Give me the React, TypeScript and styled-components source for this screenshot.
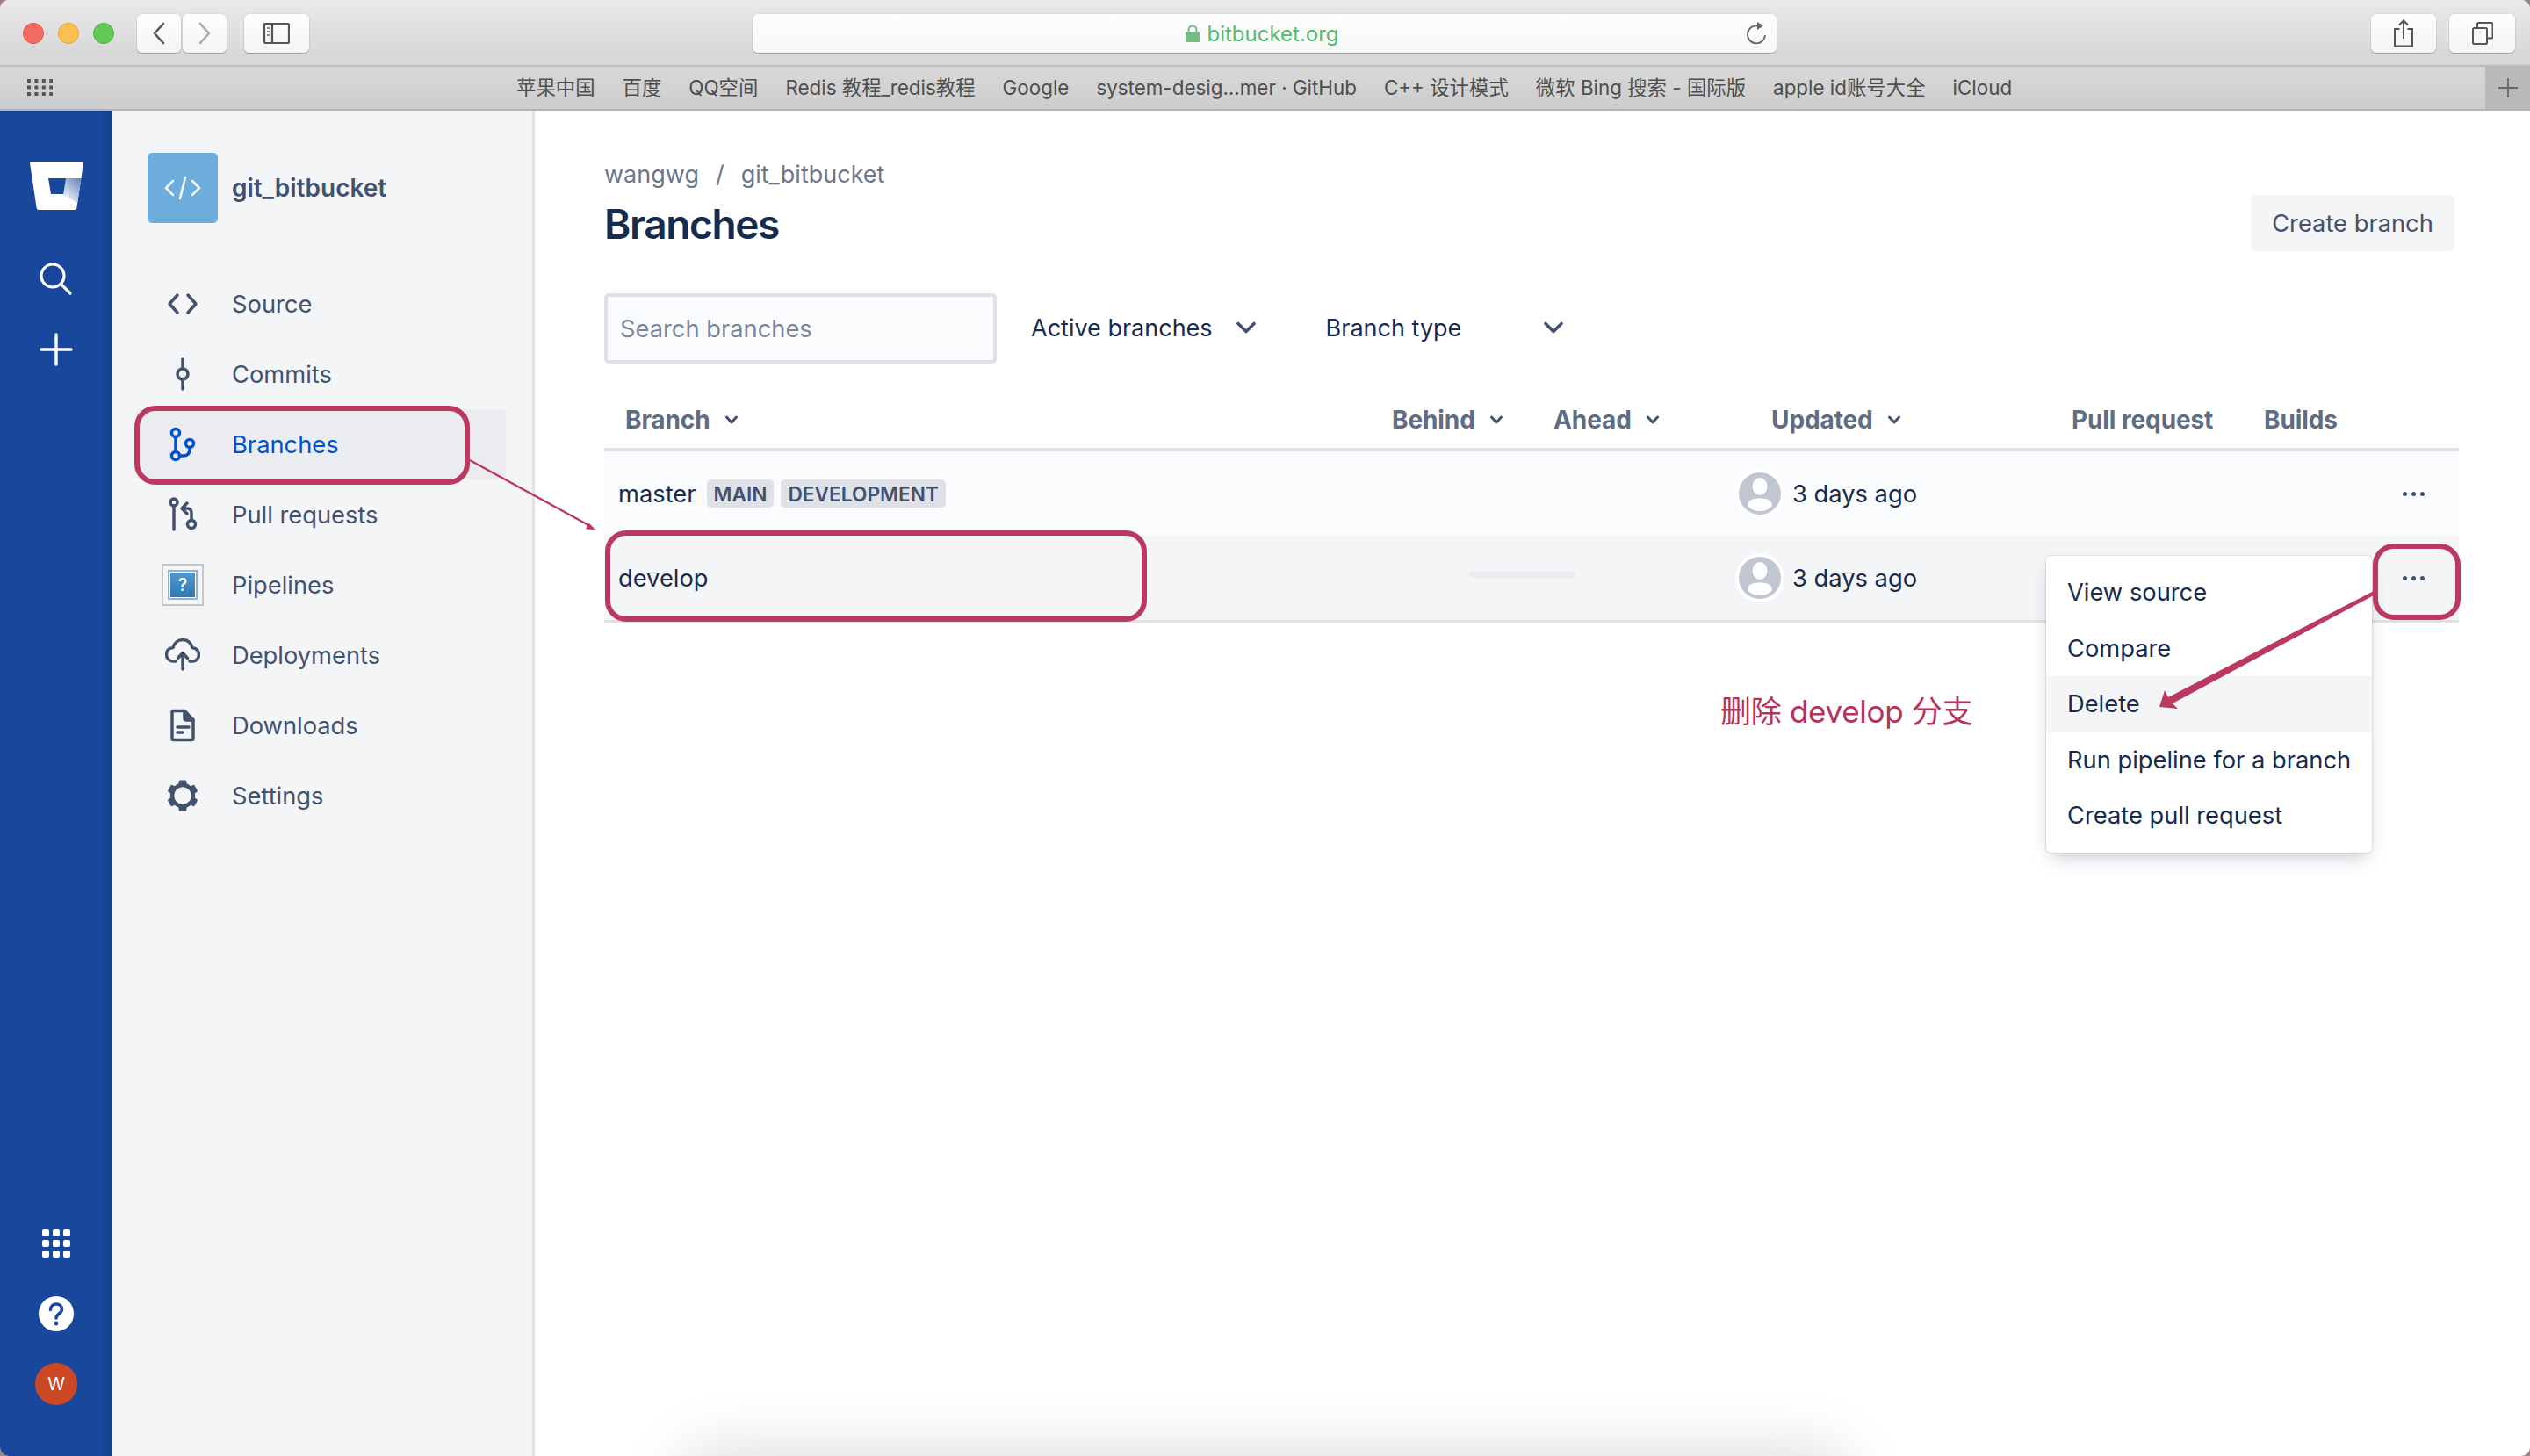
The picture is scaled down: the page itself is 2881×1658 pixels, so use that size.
import React from "react";
import styled, { createGlobalStyle } from "styled-components";

const GlobalStyle = createGlobalStyle`
  html, body { margin: 0; padding: 0; background: #9a8581; }
  body { font-family: Inter, "Noto Sans CJK SC", sans-serif; }
  * { box-sizing: border-box; }
`;

const Window = styled.div`
  position: relative;
  width: 2881px;
  height: 1658px;
  overflow: hidden;
  border-radius: 10px;
  display: flex;
  flex-direction: column;
  background: #fff;
`;

/* browser chrome */
const Toolbar = styled.div`
  height: 76px;
  flex: none;
  display: flex;
  align-items: flex-start;
  padding: 16px 17px 0 26px;
  background: linear-gradient(#e9e9e9, #d5d5d5);
  border-bottom: 2px solid #bcbcbc;
`;

const Lights = styled.div`
  display: flex;
  gap: 16px;
  margin: 10px 26px 0 0;
`;

const Light = styled.span<{ $color: string; $edge: string }>`
  width: 24px;
  height: 24px;
  border-radius: 50%;
  background: ${(p) => p.$color};
  border: 1px solid ${(p) => p.$edge};
`;

const ChromeButton = styled.div<{ $width: number; $gap?: number }>`
  width: ${(p) => p.$width}px;
  height: 44px;
  flex: none;
  margin-right: ${(p) => p.$gap ?? 0}px;
  display: flex;
  align-items: center;
  justify-content: center;
  background: linear-gradient(#fdfdfd, #f4f4f4);
  border-radius: 6px;
  box-shadow: 0 1px 1px rgba(0, 0, 0, 0.28), 0 0 0 1px rgba(0, 0, 0, 0.04);
`;

const UrlBar = styled.div`
  position: relative;
  width: 1166px;
  height: 44px;
  margin-left: 505px;
  display: flex;
  align-items: center;
  justify-content: center;
  gap: 8px;
  padding-right: 5px;
  background: linear-gradient(#fdfdfd, #f7f7f7);
  border-radius: 6px;
  box-shadow: 0 1px 1px rgba(0, 0, 0, 0.28), 0 0 0 1px rgba(0, 0, 0, 0.04);
  color: #55b96f;
  font-size: 24px;
`;

const Reload = styled.svg`
  position: absolute;
  right: 10px;
  top: 8px;
`;

const RightButtons = styled.div`
  margin-left: auto;
  display: flex;
  gap: 15px;
`;

const Bookmarks = styled.div`
  height: 50px;
  flex: none;
  display: flex;
  align-items: center;
  padding-left: 31px;
  background: linear-gradient(#d8d8d8, #cdcdcd);
  border-bottom: 2px solid #b4b4b4;
`;

const BookmarkList = styled.div`
  display: flex;
  align-items: baseline;
  gap: 31px;
  margin-left: 528px;
  color: #4e4e4e;
  font-size: 22.4px;
  line-height: 30px;
  white-space: nowrap;
`;

const NewBookmark = styled.div`
  margin-left: auto;
  width: 51px;
  height: 48px;
  display: flex;
  align-items: center;
  justify-content: center;
  background: #b9b9b9;
`;

/* page */
const Body = styled.div`
  flex: 1;
  display: flex;
  min-height: 0;
`;

const Rail = styled.nav`
  width: 128px;
  flex: none;
  display: flex;
  flex-direction: column;
  align-items: center;
  padding: 58px 0 58px;
  background: linear-gradient(to right, #18479b 90%, #123f8a);
`;

const RailIcons = styled.div<{ $gap: number; $top?: number }>`
  display: flex;
  flex-direction: column;
  align-items: center;
  gap: ${(p) => p.$gap}px;
  margin-top: ${(p) => (p.$top ? `${p.$top}px` : "auto")};
`;

const UserBadge = styled.div`
  width: 48px;
  height: 48px;
  margin-top: -4px;
  border-radius: 50%;
  background: #cc4723;
  color: #fff;
  font-size: 20px;
  display: flex;
  align-items: center;
  justify-content: center;
`;

const Sidebar = styled.aside`
  width: 481px;
  flex: none;
  padding: 48px 30px 0 26px;
  background: #f4f5f7;
  border-right: 3px solid #e2e3e6;
`;

const RepoHeader = styled.div`
  display: flex;
  align-items: center;
  gap: 16px;
  margin: 0 0 52px 14px;
  color: #42526e;
  font-size: 28px;
  font-weight: 600;
`;

const RepoAvatar = styled.div`
  width: 80px;
  height: 80px;
  border-radius: 5px;
  background: #6daddc;
  display: flex;
  align-items: center;
  justify-content: center;
`;

const NavRow = styled.div<{ $active?: boolean }>`
  height: 80px;
  display: flex;
  align-items: center;
  gap: 36px;
  padding-left: 34px;
  border-radius: 5px;
  font-size: 27.3px;
  color: ${(p) => (p.$active ? "#0052cc" : "#42526e")};
  background: ${(p) => (p.$active ? "#ebecf0" : "transparent")};
`;

const NavIcon = styled.svg`
  width: 40px;
  height: 40px;
  flex: none;
  fill: none;
  stroke: currentColor;
  stroke-width: 3.5;
  stroke-linecap: round;
  stroke-linejoin: round;
`;

const BrokenImage = styled.div`
  width: 48px;
  height: 48px;
  margin: 0 -4px;
  flex: none;
  display: flex;
  align-items: center;
  justify-content: center;
  border: 2px solid #c4c6c9;
`;

const BrokenInner = styled.div`
  width: 32px;
  height: 32px;
  display: flex;
  align-items: center;
  justify-content: center;
  background: linear-gradient(#4f97d0, #2f79b5);
  border: 2px solid #fff;
  outline: 2px solid #8fb1d6;
  outline-offset: -1px;
  color: #fff;
  font-size: 20px;
  font-weight: 500;
`;

const Main = styled.main`
  position: relative;
  flex: 1;
  padding: 57px 81px 0 79px;
`;

const PageHeader = styled.header`
  display: flex;
  justify-content: space-between;
  align-items: flex-end;
  padding-right: 5px;
`;

const Breadcrumbs = styled.div`
  display: flex;
  gap: 19px;
  color: #6b778c;
  font-size: 27px;
  line-height: 32px;
`;

const Title = styled.h1`
  margin: 12px 0 0;
  color: #172b4d;
  font-size: 46px;
  font-weight: 600;
  line-height: 56px;
  letter-spacing: -1.4px;
`;

const CreateButton = styled.div`
  width: 232px;
  height: 64px;
  margin-bottom: -3px;
  border-radius: 5px;
  background: #f4f5f7;
  color: #42526e;
  font-size: 27.3px;
  display: flex;
  align-items: center;
  justify-content: center;
`;

const Filters = styled.div`
  display: flex;
  align-items: center;
  margin-top: 51px;
`;

const SearchBox = styled.div`
  width: 447px;
  height: 80px;
  margin-right: 39px;
  padding-left: 14px;
  display: flex;
  align-items: center;
  border: 4px solid #dfe1e6;
  border-radius: 5px;
  background: #fafbfc;
  color: #7a869a;
  font-size: 27.3px;
`;

const FilterSelect = styled.div<{ $gap: number; $after?: number }>`
  display: flex;
  align-items: center;
  gap: ${(p) => p.$gap}px;
  margin-right: ${(p) => p.$after ?? 0}px;
  margin-bottom: 2px;
  color: #172b4d;
  font-size: 27px;
`;

const Chevron = styled.svg`
  flex: none;
  fill: none;
  stroke: #42526e;
  stroke-linecap: round;
  stroke-linejoin: round;
`;

const HeadRow = styled.div`
  margin-top: 32px;
  height: 68px;
  display: grid;
  grid-template-columns: 897px 184px 248px 342px 219px 1fr;
  align-items: center;
  border-bottom: 4px solid #dfe1e6;
`;

const HeadCell = styled.div<{ $first?: boolean }>`
  display: flex;
  align-items: center;
  gap: 16px;
  padding-left: ${(p) => (p.$first ? 24 : 0)}px;
  color: #5e6c84;
  font-size: 28px;
  font-weight: 700;
  letter-spacing: -0.1px;
`;

const Row = styled.div<{ $open?: boolean }>`
  position: relative;
  height: ${(p) => (p.$open ? 100 : 96)}px;
  display: grid;
  grid-template-columns: 985px 303px 1fr 104px;
  align-items: center;
  background: ${(p) => (p.$open ? "#f4f5f7" : "#fafbfc")};
  border-bottom: ${(p) => (p.$open ? "4px solid #dfe1e6" : "none")};
  color: #172b4d;
  font-size: 27.3px;
`;

const BranchName = styled.div`
  display: flex;
  align-items: center;
  gap: 12px;
  padding-left: 16px;
`;

const Tag = styled.span`
  height: 32px;
  padding: 0 8px;
  margin-right: -4px;
  display: flex;
  align-items: center;
  border-radius: 5px;
  background: #dfe1e6;
  color: #42526e;
  font-size: 22.7px;
  font-weight: 600;
`;

const LoadingBar = styled.div`
  width: 121px;
  height: 8px;
  margin-bottom: 8px;
  border-radius: 4px;
  background: #ebecf0;
`;

const Updated = styled.div`
  display: flex;
  align-items: center;
  gap: 9px;
`;

const Dots = styled.div`
  display: flex;
  justify-content: center;
  gap: 5px;
`;

const Dot = styled.span`
  width: 5px;
  height: 5px;
  border-radius: 50%;
  background: #42526e;
`;

const Menu = styled.div`
  position: absolute;
  z-index: 2;
  top: 23px;
  right: 99px;
  width: 371px;
  padding: 10px 0;
  border-radius: 5px;
  background: #fff;
  box-shadow: 0 10px 20px -6px rgba(9, 30, 66, 0.25), 0 0 2px rgba(9, 30, 66, 0.3);
`;

const MenuItem = styled.div<{ $active?: boolean }>`
  height: 63.5px;
  padding-left: 24px;
  display: flex;
  align-items: center;
  white-space: nowrap;
  color: #172b4d;
  background: ${(p) => (p.$active ? "#f4f5f7" : "transparent")};
`;

const Note = styled.div`
  position: absolute;
  z-index: 3;
  left: 1959px;
  top: 786px;
  color: #b5325a;
  font-size: 35px;
  font-weight: 400;
  line-height: 48px;
  letter-spacing: -0.3px;
  white-space: nowrap;
`;

const Callout = styled.div<{ $x: number; $y: number; $w: number; $h: number }>`
  position: absolute;
  z-index: 3;
  left: ${(p) => p.$x}px;
  top: ${(p) => p.$y}px;
  width: ${(p) => p.$w}px;
  height: ${(p) => p.$h}px;
  border: 6px solid #b93a5e;
  border-radius: 24px;
`;

const Arrows = styled.svg`
  position: absolute;
  z-index: 4;
  left: 0;
  top: 0;
  pointer-events: none;
`;

const BottomGlow = styled.div`
  position: absolute;
  left: 790px;
  top: 1670px;
  width: 1300px;
  height: 60px;
  border-radius: 40px;
  box-shadow: 0 0 70px 22px rgba(0, 0, 0, 0.13);
`;

const bookmarks = [
  "苹果中国",
  "百度",
  "QQ空间",
  "Redis 教程_redis教程",
  "Google",
  "system-desig...mer · GitHub",
  "C++ 设计模式",
  "微软 Bing 搜索 - 国际版",
  "apple id账号大全",
  "iCloud",
];

const DownChevron = ({ big }: { big?: boolean }) =>
  big ? (
    <Chevron width="24" height="14" viewBox="0 0 24 14" strokeWidth="3.6">
      <path d="M3 2.5l9 9 9-9" />
    </Chevron>
  ) : (
    <Chevron width="16" height="10" viewBox="0 0 16 10" strokeWidth="3">
      <path d="M2.5 2l5.5 6 5.5-6" />
    </Chevron>
  );

const PersonAvatar = () => (
  <svg width="56" height="56" viewBox="0 0 56 56">
    <circle cx="28" cy="28" r="28" fill="#fff" />
    <circle cx="28" cy="28" r="24" fill="#c1c7d0" />
    <ellipse cx="28" cy="20" rx="8.5" ry="10" fill="#fff" />
    <path d="M14 42c0-6 5-8.500 14-8.500s14 2.500 14 8.500c-3.500 4-8.500 6-14 6s-10.500-2-14-6z" fill="#fff" />
  </svg>
);

const MoreDots = () => (
  <Dots>
    <Dot />
    <Dot />
    <Dot />
  </Dots>
);

const SourceIcon = () => (
  <NavIcon viewBox="0 0 40 40">
    <path d="M14 10l-9 10 9 10M26 10l9 10-9 10" />
  </NavIcon>
);

const CommitIcon = () => (
  <NavIcon viewBox="0 0 40 40">
    <circle cx="20" cy="20" r="6" />
    <path d="M20 3v11M20 26v11" />
  </NavIcon>
);

const BranchIcon = () => (
  <NavIcon viewBox="0 0 40 40">
    <circle cx="12" cy="7" r="4.500" />
    <circle cx="12" cy="33" r="4.500" />
    <circle cx="28" cy="19" r="4.500" />
    <path d="M12 11.500v17M28 23.500v2c0 5-3 7.500-7.500 7.500h-4" />
  </NavIcon>
);

const PullRequestIcon = () => (
  <NavIcon viewBox="0 0 40 40">
    <circle cx="10" cy="6" r="4" />
    <circle cx="30" cy="31" r="4.500" />
    <path d="M10 10v27M30 26.500V18c0-3.500-2-5-5-5h-5M25 7l-6 6 6 6" />
  </NavIcon>
);

const CloudIcon = () => (
  <NavIcon viewBox="0 0 40 40">
    <path d="M12 27H9c-4.500 0-7.500-3.500-7.500-8 0-4.500 3.500-7.500 7.500-7.500C10.500 6 15 2.500 20 2.500c6 0 10 4.500 11 9 4.500.5 7.500 3.500 7.500 8 0 4.500-3.500 7.500-7.500 7.500h-3" />
    <path d="M20 36V18M14.500 23.500l5.500-6 5.500 6" />
  </NavIcon>
);

const FileIcon = () => (
  <NavIcon viewBox="0 0 40 40">
    <path d="M9.500 3.500H22L32 14v21c0 1-.5 1.500-2 1.500H9.500c-1 0-1.500-.5-1.500-1.500V5c0-1 .5-1.500 1.500-1.500z" />
    <path d="M22 3.500V12c0 1.500.5 2 2 2h8z" fill="currentColor" />
    <path d="M14 22h13M14 28h6" />
  </NavIcon>
);

const GearIcon = () => (
  <NavIcon viewBox="0 0 40 40">
    <circle cx="20" cy="20" r="12" strokeWidth="4.500" />
    {[0, 60, 120, 180, 240, 300].map((a) => (
      <rect key={a} x="15.500" y="2.500" width="9" height="6" rx="1.500" fill="currentColor" stroke="none" transform={`rotate(${a} 20 20)`} />
    ))}
  </NavIcon>
);

const navItems = [
  { label: "Source", icon: <SourceIcon /> },
  { label: "Commits", icon: <CommitIcon /> },
  { label: "Branches", icon: <BranchIcon />, active: true },
  { label: "Pull requests", icon: <PullRequestIcon /> },
  {
    label: "Pipelines",
    icon: (
      <BrokenImage>
        <BrokenInner>?</BrokenInner>
      </BrokenImage>
    ),
  },
  { label: "Deployments", icon: <CloudIcon /> },
  { label: "Downloads", icon: <FileIcon /> },
  { label: "Settings", icon: <GearIcon /> },
];

export default function App() {
  return (
    <Window>
      <GlobalStyle />
      <Toolbar>
        <Lights>
          <Light $color="#f46b60" $edge="#e0564c" />
          <Light $color="#f9c04f" $edge="#e0a63c" />
          <Light $color="#60c955" $edge="#4fb145" />
        </Lights>
        <ChromeButton $width={50} $gap={2}>
          <svg width="16" height="26" viewBox="0 0 16 26" fill="none" stroke="#555" strokeWidth="2.6" strokeLinecap="round" strokeLinejoin="round">
            <path d="M13 2L3 13l10 11" />
          </svg>
        </ChromeButton>
        <ChromeButton $width={50} $gap={20}>
          <svg width="16" height="26" viewBox="0 0 16 26" fill="none" stroke="#aaa" strokeWidth="2.6" strokeLinecap="round" strokeLinejoin="round">
            <path d="M3 2l10 11L3 24" />
          </svg>
        </ChromeButton>
        <ChromeButton $width={74}>
          <svg width="30" height="24" viewBox="0 0 30 24" fill="none" stroke="#555" strokeWidth="2.2">
            <rect x="1" y="1" width="28" height="22" rx="1.500" />
            <path d="M10 1v22" />
            <path d="M4 6h3M4 10h3M4 14h3" strokeWidth="1.800" stroke="#888" />
          </svg>
        </ChromeButton>
        <UrlBar>
          <svg width="16" height="20" viewBox="0 0 16 20">
            <path d="M3.500 9V6a4.500 4.500 0 019 0v3" fill="none" stroke="#74bd85" strokeWidth="2" />
            <rect x="0" y="8.500" width="16" height="11.500" rx="1" fill="#74bd85" />
          </svg>
          bitbucket.org
          <Reload width="26" height="28" viewBox="0 0 26 28" fill="none" stroke="#666" strokeWidth="1.800">
            <path d="M15 5.500A10 10 0 1023 16" />
            <path d="M14 1l7 4.500-7 4.500z" fill="#666" stroke="none" />
          </Reload>
        </UrlBar>
        <RightButtons>
          <ChromeButton $width={74}>
            <svg width="24" height="32" viewBox="0 0 24 32" fill="none" stroke="#555" strokeWidth="2">
              <path d="M7.500 11H2v19.500h20V11h-5.500M12 22V2M7 6.500L12 1.500l5 5" />
            </svg>
          </ChromeButton>
          <ChromeButton $width={75}>
            <svg width="24" height="26" viewBox="0 0 24 26" fill="none" stroke="#555" strokeWidth="2">
              <rect x="1" y="7" width="16" height="18" rx="1.500" />
              <path d="M6 7V2.500C6 1.500 6.500 1 7.500 1H22c1 0 1.500.5 1.500 1.500V17c0 1-.5 1.500-1.500 1.500h-5" />
            </svg>
          </ChromeButton>
        </RightButtons>
      </Toolbar>

      <Bookmarks>
        <svg width="29" height="20" viewBox="0 0 29 20" fill="#555">
          {[0, 1, 2].map((r) =>
            [0, 1, 2, 3].map((c) => <rect key={`${r}-${c}`} x={c * 8.400} y={r * 7.500} width="4" height="4" />),
          )}
        </svg>
        <BookmarkList>
          {bookmarks.map((b) => (
            <span key={b}>{b}</span>
          ))}
        </BookmarkList>
        <NewBookmark>
          <svg width="24" height="24" viewBox="0 0 24 24" stroke="#666" strokeWidth="1.800">
            <path d="M12 1v22M1 12h22" />
          </svg>
        </NewBookmark>
      </Bookmarks>

      <Body>
        <Rail>
          <svg width="61" height="55" viewBox="0 0 61 55">
            <defs>
              <linearGradient id="bucketShade" x1="1" y1="0" x2="0.2" y2="1">
                <stop offset="0" stopColor="#5d80bd" />
                <stop offset="1" stopColor="#fff" />
              </linearGradient>
            </defs>
            <path d="M1.500 0h58c1 0 1.500.5 1.500 1.500L53.500 52c-.2 2-1 3-3 3h-40c-2 0-2.800-1-3-3L0 1.500C0 .5.500 0 1.500 0z" fill="#fff" />
            <path d="M41 19h17.500L54 47 36 37z" fill="url(#bucketShade)" />
            <path d="M21 19h20l-2.800 18H24z" fill="#18479b" />
          </svg>
          <RailIcons $gap={40} $top={59}>
            <svg width="40" height="40" viewBox="0 0 40 40" fill="none" stroke="#fff" strokeWidth="3.200" strokeLinecap="round">
              <circle cx="16" cy="16" r="13" />
              <path d="M26 26l10 10" />
            </svg>
            <svg width="40" height="40" viewBox="0 0 40 40" stroke="#fff" strokeWidth="3.400" strokeLinecap="round">
              <path d="M20 3v34M3 20h34" />
            </svg>
          </RailIcons>
          <RailIcons $gap={40}>
            <svg width="40" height="40" viewBox="0 0 40 40" fill="#fff">
              {[0, 1, 2].map((r) =>
                [0, 1, 2].map((c) => <rect key={`${r}-${c}`} x={4 + c * 12} y={4 + r * 12} width="8" height="8" rx="2" />),
              )}
            </svg>
            <svg width="40" height="40" viewBox="0 0 40 40">
              <circle cx="20" cy="20" r="20" fill="#fff" />
              <path d="M13.500 15.500c0-4 3-6.500 6.500-6.500s6.500 2.500 6.500 6c0 5-6.500 5-6.500 10" fill="none" stroke="#18479b" strokeWidth="3.600" strokeLinecap="round" />
              <circle cx="20" cy="31" r="2.400" fill="#18479b" />
            </svg>
            <UserBadge>W</UserBadge>
          </RailIcons>
        </Rail>

        <Sidebar>
          <RepoHeader>
            <RepoAvatar>
              <svg width="42" height="28" viewBox="0 0 42 28" fill="none" stroke="#fff" strokeWidth="2.600" strokeLinecap="round" strokeLinejoin="round" opacity="0.92">
                <path d="M10 6l-8 8 8 8M32 6l8 8-8 8M24 2l-6 24" />
              </svg>
            </RepoAvatar>
            git_bitbucket
          </RepoHeader>
          {navItems.map((item) => (
            <NavRow key={item.label} $active={item.active}>
              {item.icon}
              {item.label}
            </NavRow>
          ))}
        </Sidebar>

        <Main>
          <PageHeader>
            <div>
              <Breadcrumbs>
                <span>wangwg</span>
                <span>/</span>
                <span>git_bitbucket</span>
              </Breadcrumbs>
              <Title>Branches</Title>
            </div>
            <CreateButton>Create branch</CreateButton>
          </PageHeader>

          <Filters>
            <SearchBox>Search branches</SearchBox>
            <FilterSelect $gap={26} $after={79}>
              Active branches <DownChevron big />
            </FilterSelect>
            <FilterSelect $gap={93}>
              Branch type <DownChevron big />
            </FilterSelect>
          </Filters>

          <HeadRow>
            <HeadCell $first>
              Branch <DownChevron />
            </HeadCell>
            <HeadCell>
              Behind <DownChevron />
            </HeadCell>
            <HeadCell>
              Ahead <DownChevron />
            </HeadCell>
            <HeadCell>
              Updated <DownChevron />
            </HeadCell>
            <HeadCell>Pull request</HeadCell>
            <HeadCell>Builds</HeadCell>
          </HeadRow>

          <Row>
            <BranchName>
              master
              <Tag>MAIN</Tag>
              <Tag>DEVELOPMENT</Tag>
            </BranchName>
            <span />
            <Updated>
              <PersonAvatar />3 days ago
            </Updated>
            <MoreDots />
          </Row>

          <Row $open>
            <BranchName>develop</BranchName>
            <LoadingBar />
            <Updated>
              <PersonAvatar />3 days ago
            </Updated>
            <MoreDots />
            <Menu>
              <MenuItem>View source</MenuItem>
              <MenuItem>Compare</MenuItem>
              <MenuItem $active>Delete</MenuItem>
              <MenuItem>Run pipeline for a branch</MenuItem>
              <MenuItem>Create pull request</MenuItem>
            </Menu>
          </Row>
        </Main>
      </Body>

      <BottomGlow />
      <Callout $x={153} $y={462} $w={382} $h={90} />
      <Callout $x={689} $y={604} $w={617} $h={104} />
      <Callout $x={2702} $y={619} $w={100} $h={87} />
      <Note>删除 develop 分支</Note>
      <Arrows width="2881" height="1658" viewBox="0 0 2881 1658">
        <path d="M535 524L672 599" fill="none" stroke="#b93a5e" strokeWidth="2.500" />
        <path d="M678 603l-11-.5 3.500-7z" fill="#b93a5e" />
        <path d="M2703 673L2703 678L2474 801L2480 807L2459 805L2465 786L2469 794z" fill="#b93a5e" />
      </Arrows>
    </Window>
  );
}
